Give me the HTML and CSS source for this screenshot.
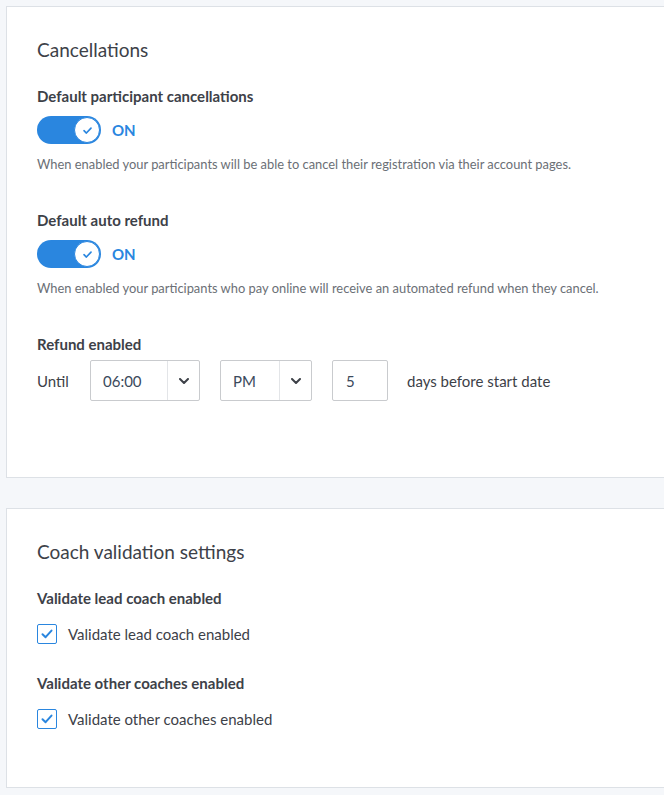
FILE: index.html
```html
<!DOCTYPE html>
<html>
<head>
<meta charset="utf-8">
<link rel="stylesheet" href="styles.css">
</head>
<body>
<div class="page">
  <section class="card card-cancel">
    <h2 class="card-title">Cancellations</h2>

    <div class="field">
      <div class="label">Default participant cancellations</div>
      <div class="toggle-row">
        <span class="toggle"><span class="knob"><svg viewBox="0 0 10 10" width="11" height="11"><path d="M1.8 5.2 L4 7.3 L8.2 2.8" fill="none" stroke="#2a86df" stroke-width="1.5" stroke-linecap="round" stroke-linejoin="round"/></svg></span></span>
        <span class="toggle-text">ON</span>
      </div>
      <p class="help">When enabled your participants will be able to cancel their registration via their account pages.</p>
    </div>

    <div class="field field-gap">
      <div class="label">Default auto refund</div>
      <div class="toggle-row">
        <span class="toggle"><span class="knob"><svg viewBox="0 0 10 10" width="11" height="11"><path d="M1.8 5.2 L4 7.3 L8.2 2.8" fill="none" stroke="#2a86df" stroke-width="1.5" stroke-linecap="round" stroke-linejoin="round"/></svg></span></span>
        <span class="toggle-text">ON</span>
      </div>
      <p class="help">When enabled your participants who pay online will receive an automated refund when they cancel.</p>
    </div>

    <div class="field field-gap">
      <div class="label">Refund enabled</div>
      <div class="refund-row">
        <span class="until">Until</span>
        <div class="select select-time">
          <span class="select-value">06:00</span>
          <span class="select-arrow"><svg viewBox="0 0 10 6" width="10" height="6"><path d="M1 1 L5 5 L9 1" fill="none" stroke="#3d4148" stroke-width="2" stroke-linecap="round" stroke-linejoin="round"/></svg></span>
        </div>
        <div class="select select-ampm">
          <span class="select-value">PM</span>
          <span class="select-arrow"><svg viewBox="0 0 10 6" width="10" height="6"><path d="M1 1 L5 5 L9 1" fill="none" stroke="#3d4148" stroke-width="2" stroke-linecap="round" stroke-linejoin="round"/></svg></span>
        </div>
        <div class="input-days">5</div>
        <span class="days-text">days before start date</span>
      </div>
    </div>
  </section>

  <section class="card card-coach">
    <h2 class="card-title">Coach validation settings</h2>

    <div class="field">
      <div class="label">Validate lead coach enabled</div>
      <label class="check-row">
        <span class="checkbox"><svg viewBox="0 0 14 14" width="14" height="14"><path d="M2.5 7.2 L5.6 10.2 L11.5 3.6" fill="none" stroke="#2a86df" stroke-width="2" stroke-linecap="round" stroke-linejoin="round"/></svg></span>
        <span class="check-text">Validate lead coach enabled</span>
      </label>
    </div>

    <div class="field field-gap2">
      <div class="label">Validate other coaches enabled</div>
      <label class="check-row">
        <span class="checkbox"><svg viewBox="0 0 14 14" width="14" height="14"><path d="M2.5 7.2 L5.6 10.2 L11.5 3.6" fill="none" stroke="#2a86df" stroke-width="2" stroke-linecap="round" stroke-linejoin="round"/></svg></span>
        <span class="check-text">Validate other coaches enabled</span>
      </label>
    </div>
  </section>
</div>
</body>
</html>
```

FILE: styles.css
```css
html, body {
  margin: 0;
  padding: 0;
  overflow: hidden;
}
body {
  background: #f5f7fa;
  font-family: Lato, "Liberation Sans", sans-serif;
  color: #3d4148;
}
.page {
  padding: 6px 0 0 6px;
}
.card {
  background: #fff;
  border: 1px solid #dde1e6;
  margin-right: -20px;
  padding: 31px 30px 0 30px;
}
.card-cancel {
  padding-bottom: 76px;
}
.card-coach {
  margin-top: 30px;
  padding-bottom: 58px;
}
.card-title {
  margin: 0 0 24px 0;
  font-size: 19px;
  line-height: 24px;
  font-weight: 400;
  color: #3d4148;
}
.label {
  font-size: 15px;
  line-height: 20px;
  font-weight: 700;
  color: #3d4148;
}
.field-gap {
  margin-top: 37px;
}
.field-gap2 {
  margin-top: 29px;
}
.toggle-row {
  display: flex;
  align-items: center;
  margin-top: 10px;
  height: 28px;
}
.toggle {
  width: 64px;
  height: 28px;
  border-radius: 14px;
  background: #2a86df;
  display: flex;
  align-items: center;
  justify-content: flex-end;
  box-sizing: border-box;
  padding-right: 1px;
}
.knob {
  width: 26px;
  height: 26px;
  box-sizing: border-box;
  border: 1px solid #2a86df;
  border-radius: 50%;
  background: #fff;
  display: flex;
  align-items: center;
  justify-content: center;
}
.toggle-text {
  margin-left: 11px;
  font-size: 15px;
  font-weight: 700;
  color: #2a86df;
}
.help {
  margin: 11px 0 0 0;
  font-size: 12.9px;
  line-height: 18px;
  color: #6b6f76;
}
.refund-row {
  display: flex;
  align-items: center;
  margin-top: 6px;
  font-size: 15px;
}
.until {
  width: 53px;
  color: #3d4148;
}
.select {
  display: flex;
  height: 41px;
  box-sizing: border-box;
  border: 1px solid #c9cbce;
  border-radius: 2px;
  background: #fff;
}
.select-time {
  width: 110px;
}
.select-ampm {
  width: 92px;
  margin-left: 20px;
}
.select-value {
  flex: 1;
  display: flex;
  align-items: center;
  padding-left: 12px;
  color: #3b4a5c;
}
.select-arrow {
  width: 31px;
  border-left: 1px solid #e3e5e8;
  display: flex;
  align-items: center;
  justify-content: center;
}
.input-days {
  width: 56px;
  height: 41px;
  box-sizing: border-box;
  border: 1px solid #c9cbce;
  border-radius: 2px;
  margin-left: 20px;
  padding-left: 13px;
  display: flex;
  align-items: center;
  color: #3b4a5c;
}
.days-text {
  margin-left: 19px;
  color: #3d4148;
}
.check-row {
  display: flex;
  align-items: center;
  margin-top: 16px;
}
.checkbox {
  width: 20px;
  height: 20px;
  box-sizing: border-box;
  border: 1px solid #2a86df;
  border-radius: 2px;
  display: flex;
  align-items: center;
  justify-content: center;
}
.check-text {
  margin-left: 11px;
  font-size: 15px;
  color: #3d4148;
}
```
